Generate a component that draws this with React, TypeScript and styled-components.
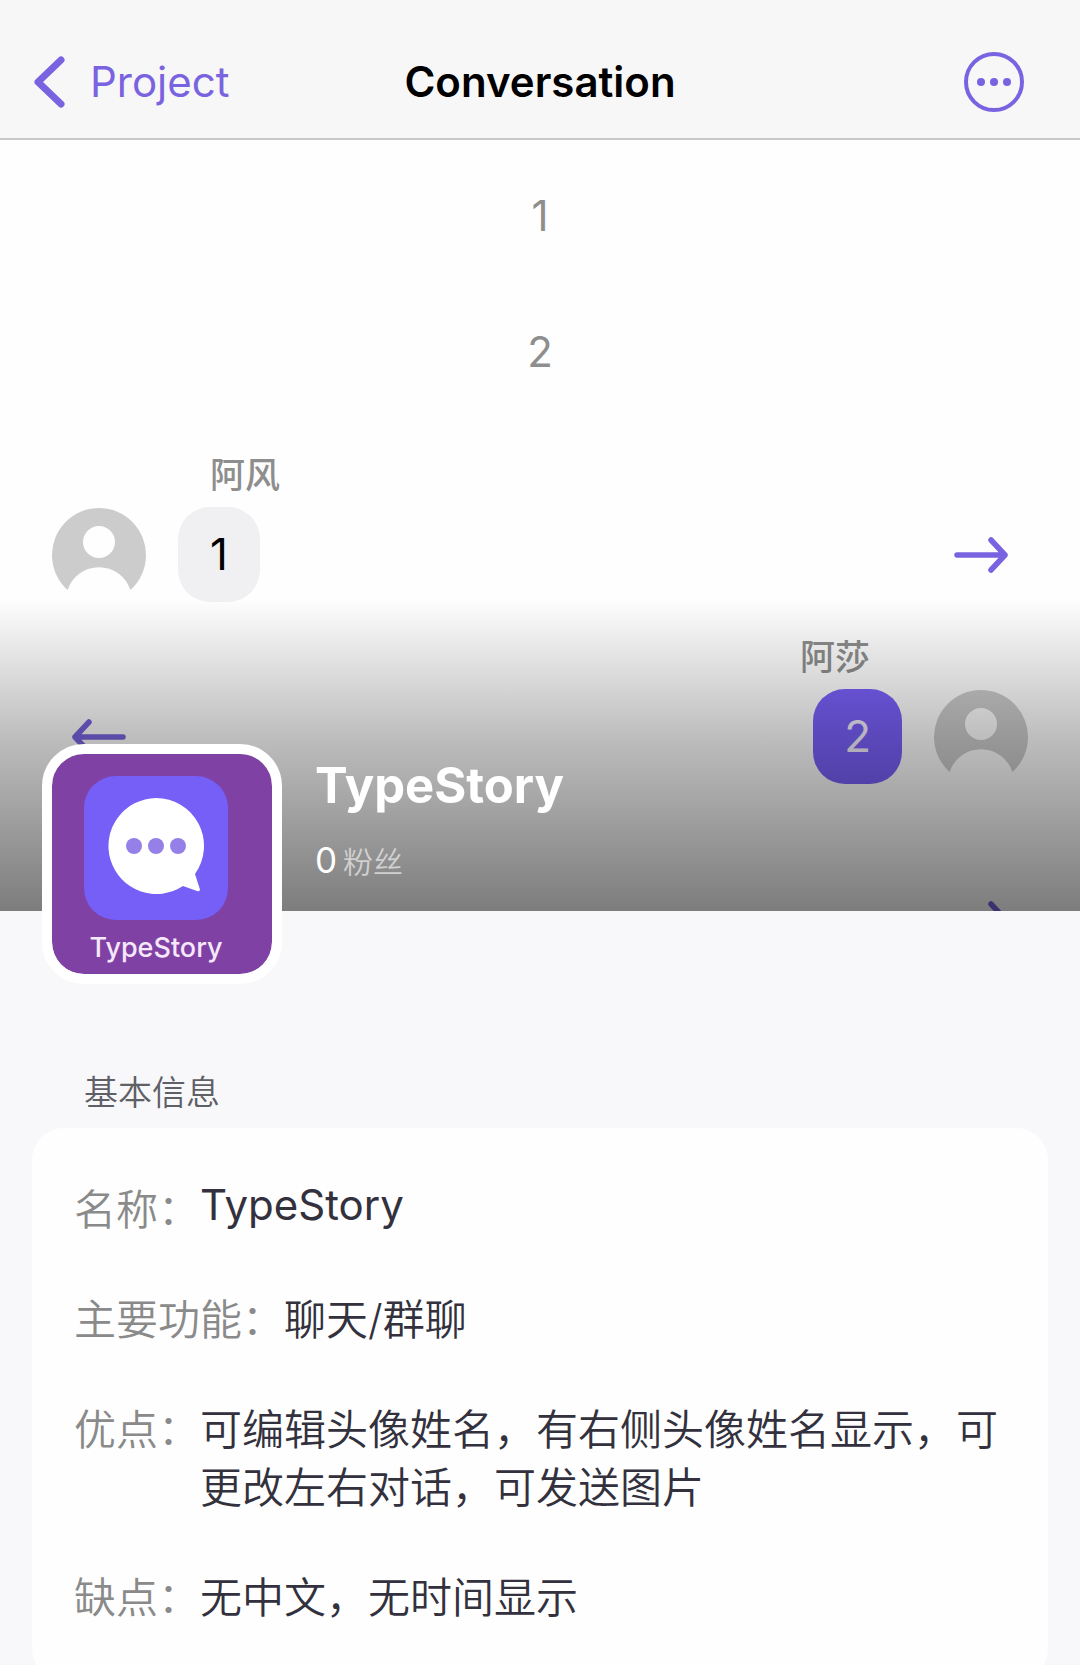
import React from "react";
import styled, { createGlobalStyle } from "styled-components";

const ACCENT = "#7a63e0";

const GlobalStyle = createGlobalStyle`
  *, *::before, *::after { box-sizing: border-box; }
  body {
    margin: 0;
    background: #f8f8fb;
    font-family: Inter, "Noto Sans CJK SC", sans-serif;
    color: #32313d;
  }
  h1, h2, p, dl, dt, dd { margin: 0; font-weight: 400; }
  button {
    padding: 0;
    border: 0;
    background: none;
    color: inherit;
    font: inherit;
    cursor: pointer;
  }
  svg { display: block; flex: none; }
`;

const Page = styled.main`
  height: 100vh;
  overflow: hidden;
`;

const Cover = styled.section`
  position: relative;
  height: 911px;
  overflow: hidden;
  background: #fefefe;
`;

const CoverShade = styled.div`
  position: absolute;
  inset: auto 0 0;
  height: 312px;
  background: linear-gradient(
    rgba(0, 0, 0, 0),
    rgba(0, 0, 0, 0.26) 45%,
    rgba(0, 0, 0, 0.51)
  );
  pointer-events: none;
`;

const NavBar = styled.header`
  display: grid;
  grid-template-columns: 1fr auto 1fr;
  align-items: center;
  height: 140px;
  padding: 26px 56px 0 34px;
  border-bottom: 2px solid #c8c8c8;
  background: #f7f7f7;
`;

const BackButton = styled.button`
  display: flex;
  align-items: center;
  justify-self: start;
  gap: 24px;
  color: ${ACCENT};
  font-size: 42px;
  line-height: 52px;
`;

const NavTitle = styled.h2`
  padding-left: 22px;
  color: #000;
  font-size: 42px;
  font-weight: 600;
  line-height: 52px;
`;

const MoreButton = styled.button`
  justify-self: end;
  color: ${ACCENT};
`;

const Thread = styled.div`
  display: flex;
  flex-direction: column;
  padding-top: 8px;
`;

const Narration = styled.p`
  color: #8e8e8e;
  font-size: 42px;
  line-height: 136px;
  text-align: center;
`;

const Message = styled.article<{ $side: "left" | "right" }>`
  display: flex;
  flex-direction: column;
  align-items: ${(p) => (p.$side === "left" ? "flex-start" : "flex-end")};
  margin-top: 23px;
`;

const Sender = styled.span`
  min-height: 64px;
  padding: 0 210px;
  color: #8e8e8e;
  font-size: 35px;
  font-weight: 500;
  line-height: 64px;
`;

const MessageRow = styled.div<{ $side: "left" | "right" }>`
  display: flex;
  flex-direction: ${(p) => (p.$side === "left" ? "row" : "row-reverse")};
  align-items: center;
  gap: 32px;
  align-self: stretch;
  height: 95px;
  padding: ${(p) => (p.$side === "left" ? "0 72px 0 52px" : "0 52px 0 72px")};
`;

const Bubble = styled.span<{ $mine?: boolean }>`
  padding: 0 ${(p) => (p.$mine ? 31 : 32)}px;
  border-radius: 32px;
  background: ${(p) => (p.$mine ? "#7a60fa" : "#f0f0f2")};
  color: ${(p) => (p.$mine ? "#f4f0ff" : "#000")};
  font-size: 44px;
  line-height: 95px;
`;

const Spacer = styled.span`
  flex: 1;
`;

const MoveButton = styled.button`
  color: ${ACCENT};
`;

const Profile = styled.section`
  position: relative;
  display: flex;
  gap: 33px;
  margin-top: -167px;
  padding: 0 42px;
`;

const AppIcon = styled.div`
  display: flex;
  flex-direction: column;
  align-items: center;
  gap: 10px;
  flex: none;
  width: 240px;
  height: 240px;
  padding: 22px 12px 0 0;
  border: 10px solid #fff;
  border-radius: 42px;
  background: #8041a4;
  background-clip: padding-box;
  color: #f6e8fb;
  font-size: 27px;
  font-weight: 500;
  line-height: 36px;
`;

const ProfileText = styled.div`
  display: flex;
  flex-direction: column;
  gap: 22px;
  padding-top: 12px;
`;

const AppName = styled.h1`
  color: #fff;
  font-size: 49px;
  font-weight: 700;
  line-height: 60px;
`;

const Followers = styled.p`
  display: flex;
  align-items: baseline;
  gap: 6px;
  color: #fff;
  font-size: 35px;
  line-height: 44px;
`;

const FollowersLabel = styled.span`
  color: #d0d0d0;
  font-size: 30px;
  font-weight: 350;
`;

const Info = styled.section`
  display: flex;
  flex-direction: column;
  gap: 10px;
  padding: 84px 32px 32px;
`;

const InfoTitle = styled.h2`
  padding: 0 52px;
  color: #5f5f66;
  font-size: 34px;
  font-weight: 350;
  line-height: 50px;
`;

const InfoCard = styled.dl`
  display: flex;
  flex-direction: column;
  gap: 52px;
  padding: 53px 42px;
  border-radius: 32px;
  background: #fefefe;
`;

const InfoRow = styled.div`
  display: flex;
  align-items: flex-start;
  font-size: 42px;
  line-height: 58px;
`;

const InfoLabel = styled.dt`
  flex: none;
  color: #8a8a8a;
  font-weight: 350;
`;

const InfoValue = styled.dd`
  flex: 1;
  color: #32313d;
  font-weight: 350;

  &:lang(en) {
    font-weight: 400;
    line-height: 48px;
  }
`;

function ChevronLeft() {
  return (
    <svg width="32" height="52" viewBox="0 0 32 52" fill="none" aria-hidden="true">
      <path
        d="M27 4 L4 26 L27 48"
        stroke="currentColor"
        strokeWidth="7"
        strokeLinecap="round"
        strokeLinejoin="round"
      />
    </svg>
  );
}

function MoreCircle() {
  return (
    <svg width="60" height="60" viewBox="0 0 60 60" aria-hidden="true">
      <circle cx="30" cy="30" r="28" fill="none" stroke="currentColor" strokeWidth="4" />
      <circle cx="17" cy="30" r="4" fill="currentColor" />
      <circle cx="30" cy="30" r="4" fill="currentColor" />
      <circle cx="43" cy="30" r="4" fill="currentColor" />
    </svg>
  );
}

function Arrow({ to }: { to: "left" | "right" }) {
  const head = to === "right" ? "M37 3 L51 18 L37 33" : "M17 3 L3 18 L17 33";
  return (
    <svg width="54" height="36" viewBox="0 0 54 36" fill="none" aria-hidden="true">
      <path
        d={`M3 18 H51 ${head}`}
        stroke="currentColor"
        strokeWidth="5.5"
        strokeLinecap="round"
        strokeLinejoin="round"
      />
    </svg>
  );
}

function Avatar() {
  return (
    <svg width="94" height="94" viewBox="0 0 94 94" aria-hidden="true">
      <path
        fillRule="evenodd"
        fill="#cccccc"
        d="M15.6 82 A47 47 0 1 1 78.4 82 A33 33 0 0 0 15.6 82 Z M47 18 a16 16 0 1 0 0 32 a16 16 0 1 0 0 -32 Z"
      />
    </svg>
  );
}

function ChatLogo() {
  return (
    <svg width="144" height="144" viewBox="0 0 144 144" aria-hidden="true">
      <rect width="144" height="144" rx="32" fill="#755ff7" />
      <path
        fill="#fff"
        d="M72 22 A48 48 0 1 0 99 110 L113 115 Q117 116 115.500 112 L111 98 A48 48 0 0 0 72 22 Z"
      />
      <circle cx="50" cy="70" r="8" fill="#9580e8" />
      <circle cx="72" cy="70" r="8" fill="#9580e8" />
      <circle cx="94" cy="70" r="8" fill="#9580e8" />
    </svg>
  );
}

const info = [
  { label: "名称：", value: "TypeStory", lang: "en" },
  { label: "主要功能：", value: "聊天/群聊" },
  {
    label: "优点：",
    value: "可编辑头像姓名，有右侧头像姓名显示，可更改左右对话，可发送图片",
  },
  { label: "缺点：", value: "无中文，无时间显示" },
];

export default function App() {
  return (
    <Page lang="zh-CN">
      <GlobalStyle />
      <Cover>
        <NavBar>
          <BackButton type="button">
            <ChevronLeft />
            Project
          </BackButton>
          <NavTitle>Conversation</NavTitle>
          <MoreButton type="button" aria-label="More">
            <MoreCircle />
          </MoreButton>
        </NavBar>
        <Thread>
          <Narration>1</Narration>
          <Narration>2</Narration>
          <Message $side="left">
            <Sender>阿风</Sender>
            <MessageRow $side="left">
              <Avatar />
              <Bubble>1</Bubble>
              <Spacer />
              <MoveButton type="button" aria-label="Move right">
                <Arrow to="right" />
              </MoveButton>
            </MessageRow>
          </Message>
          <Message $side="right">
            <Sender>阿莎</Sender>
            <MessageRow $side="right">
              <Avatar />
              <Bubble $mine>2</Bubble>
              <Spacer />
              <MoveButton type="button" aria-label="Move left">
                <Arrow to="left" />
              </MoveButton>
            </MessageRow>
          </Message>
          <Message $side="left">
            <Sender />
            <MessageRow $side="left">
              <Spacer />
              <MoveButton type="button" aria-label="Move right">
                <Arrow to="right" />
              </MoveButton>
            </MessageRow>
          </Message>
        </Thread>
        <CoverShade />
      </Cover>
      <Profile>
        <AppIcon>
          <ChatLogo />
          <span>TypeStory</span>
        </AppIcon>
        <ProfileText>
          <AppName>TypeStory</AppName>
          <Followers>
            0<FollowersLabel>粉丝</FollowersLabel>
          </Followers>
        </ProfileText>
      </Profile>
      <Info>
        <InfoTitle>基本信息</InfoTitle>
        <InfoCard>
          {info.map((item) => (
            <InfoRow key={item.label}>
              <InfoLabel>{item.label}</InfoLabel>
              <InfoValue lang={item.lang}>{item.value}</InfoValue>
            </InfoRow>
          ))}
        </InfoCard>
      </Info>
    </Page>
  );
}
